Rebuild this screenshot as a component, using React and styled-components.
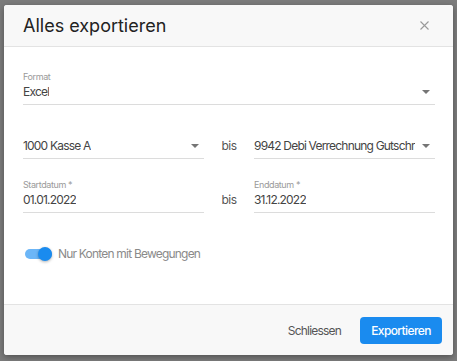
import React, { useState } from 'react'
import styled, { createGlobalStyle } from 'styled-components'

const GlobalStyle = createGlobalStyle`
  html, body {
    margin: 0;
    padding: 0;
    background: #7c7c7c;
    font-family: Inter, "Noto Sans", sans-serif;
  }
  #root {
    height: 361px;
    overflow: hidden;
  }
`

function Arrow() {
  return (
    <svg width="8" height="4" viewBox="0 0 8 4">
      <path d="M0 0 L8 0 L4 4 Z" fill="#757575" />
    </svg>
  )
}

function Field({ label, value, select }) {
  return (
    <FieldBox>
      <Label>{label || '\u00a0'}</Label>
      <Value>
        <span>{value}</span>
        {select && <Arrow />}
      </Value>
    </FieldBox>
  )
}

function App() {
  const [onlyMoves, setOnlyMoves] = useState(true)

  return (
    <>
      <GlobalStyle />
      <Modal>
        <Header>
          <Title>Alles exportieren</Title>
          <Close>
            <svg width="9" height="9" viewBox="0 0 9 9">
              <path d="M0.5 0.5 L8.5 8.5 M8.5 0.5 L0.5 8.5" stroke="#9a9a9a" strokeWidth="1.1" />
            </svg>
          </Close>
        </Header>

        <Body>
          <Field label="Format" value="Excel" select />

          <Pair>
            <Field value="1000 Kasse A" select />
            <Bis>bis</Bis>
            <Field value="9942 Debi Verrechnung Gutschr" select />
          </Pair>

          <Pair>
            <Field label="Startdatum *" value="01.01.2022" />
            <Bis>bis</Bis>
            <Field label="Enddatum *" value="31.12.2022" />
          </Pair>

          <ToggleRow onClick={() => setOnlyMoves(!onlyMoves)}>
            <Track $on={onlyMoves}>
              <Knob $on={onlyMoves} />
            </Track>
            <ToggleLabel>Nur Konten mit Bewegungen</ToggleLabel>
          </ToggleRow>
        </Body>

        <Footer>
          <TextButton>Schliessen</TextButton>
          <PrimaryButton>Exportieren</PrimaryButton>
        </Footer>
      </Modal>
    </>
  )
}

export default App

const Modal = styled.div`
  margin: 5px 0 0 4px;
  width: 449px;
  height: 350px;
  background: #fff;
  border-radius: 3px;
  box-shadow: 0 2px 6px rgba(0, 0, 0, 0.35);
  display: flex;
  flex-direction: column;
  overflow: hidden;
`

const Header = styled.div`
  height: 42px;
  flex-shrink: 0;
  box-sizing: border-box;
  display: flex;
  align-items: center;
  justify-content: space-between;
  padding: 0 24px 0 19px;
  background: #f8f8f8;
  border-bottom: 1px solid #e3e3e3;
`

const Title = styled.h2`
  margin: 0;
  font-size: 18px;
  font-weight: 400;
  color: #222;
`

const Close = styled.div`
  display: flex;
  align-items: center;
  cursor: pointer;
`

const Body = styled.div`
  flex: 1;
  display: flex;
  flex-direction: column;
  gap: 20px;
  padding: 24px 18px 0 19px;
`

const Pair = styled.div`
  display: grid;
  grid-template-columns: 1fr 50px 1fr;
`

const FieldBox = styled.div`
  display: flex;
  flex-direction: column;
  border-bottom: 1px solid #dcdcdc;
  min-width: 0;
`

const Label = styled.div`
  height: 12px;
  line-height: 12px;
  font-size: 9px;
  letter-spacing: -0.4px;
  color: #9a9a9a;
`

const Value = styled.div`
  display: flex;
  align-items: center;
  justify-content: space-between;
  gap: 6px;
  height: 17px;
  padding: 0 5px 4px 0;
  font-size: 12px;
  letter-spacing: -0.8px;
  color: #444;
  span {
    white-space: nowrap;
    overflow: hidden;
  }
  svg {
    flex-shrink: 0;
  }
`

const Bis = styled.div`
  align-self: end;
  height: 17px;
  line-height: 17px;
  padding-bottom: 5px;
  text-align: center;
  font-size: 12px;
  letter-spacing: -0.5px;
  color: #555;
`

const ToggleRow = styled.div`
  display: flex;
  align-items: center;
  gap: 6px;
  margin-top: 13px;
  padding-left: 2px;
  cursor: pointer;
`

const Track = styled.div`
  position: relative;
  width: 27px;
  height: 10px;
  border-radius: 5px;
  background: ${p => (p.$on ? '#6cb6f7' : '#c4c4c4')};
`

const Knob = styled.div`
  position: absolute;
  top: -2px;
  left: ${p => (p.$on ? '13px' : '-2px')};
  width: 14px;
  height: 14px;
  border-radius: 50%;
  background: ${p => (p.$on ? '#1a8bef' : '#f5f5f5')};
  box-shadow: 0 1px 3px rgba(0, 0, 0, 0.3);
`

const ToggleLabel = styled.span`
  font-size: 12px;
  letter-spacing: -0.8px;
  color: #8a8a8a;
`

const Footer = styled.div`
  height: 51px;
  flex-shrink: 0;
  box-sizing: border-box;
  display: flex;
  align-items: center;
  justify-content: flex-end;
  gap: 8px;
  padding: 0 11px 0 0;
  background: #f8f8f8;
  border-top: 1px solid #e3e3e3;
`

const TextButton = styled.button`
  border: none;
  background: none;
  font-family: inherit;
  font-size: 12px;
  letter-spacing: -0.8px;
  color: #555;
  padding: 6px 11px;
  cursor: pointer;
`

const PrimaryButton = styled.button`
  width: 82px;
  height: 27px;
  border: none;
  border-radius: 4px;
  background: #1a8bef;
  color: #fff;
  font-family: inherit;
  font-size: 12px;
  font-weight: 500;
  letter-spacing: -0.6px;
  cursor: pointer;
`
